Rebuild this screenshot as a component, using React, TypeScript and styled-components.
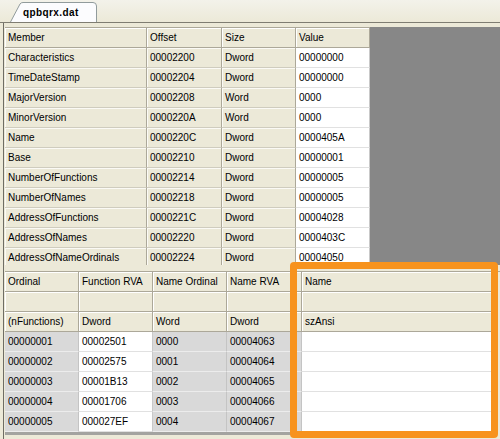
import React from "react";
import styled, { createGlobalStyle } from "styled-components";

const GlobalStyle = createGlobalStyle`
  html, body {
    margin: 0;
    padding: 0;
    background: #ece9d8;
  }
  body {
    font-family: "Liberation Sans", Arial, sans-serif;
    font-size: 10px;
    color: #000;
  }
`;

type Tone = "head" | "beige" | "white" | "gray";

const exportDir = [
  ["Characteristics", "00002200", "Dword", "00000000"],
  ["TimeDateStamp", "00002204", "Dword", "00000000"],
  ["MajorVersion", "00002208", "Word", "0000"],
  ["MinorVersion", "0000220A", "Word", "0000"],
  ["Name", "0000220C", "Dword", "0000405A"],
  ["Base", "00002210", "Dword", "00000001"],
  ["NumberOfFunctions", "00002214", "Dword", "00000005"],
  ["NumberOfNames", "00002218", "Dword", "00000005"],
  ["AddressOfFunctions", "0000221C", "Dword", "00004028"],
  ["AddressOfNames", "00002220", "Dword", "0000403C"],
  ["AddressOfNameOrdinals", "00002224", "Dword", "00004050"],
];

const exports = [
  ["00000001", "00002501", "0000", "00004063"],
  ["00000002", "00002575", "0001", "00004064"],
  ["00000003", "00001B13", "0002", "00004065"],
  ["00000004", "00001706", "0003", "00004066"],
  ["00000005", "000027EF", "0004", "00004067"],
];

const lowerHead = [
  ["Ordinal", "Function RVA", "Name Ordinal", "Name RVA", "Name"],
  ["", "", "", "", ""],
  ["(nFunctions)", "Dword", "Word", "Dword", "szAnsi"],
];

const lowerTones: Tone[] = ["gray", "white", "gray", "gray", "white"];

const App = () => {
  return (
    <Window>
      <GlobalStyle />
      <TabStrip>
        <Tab>
          <svg width="88" height="21" viewBox="0 0 88 21">
            <path
              d="M0.5 21 L10 3 Q11 1.5 13 1.5 L83 1.5 Q86.5 1.5 86.5 5 L86.5 21"
              fill="#fcfcfe"
              stroke="#919b9c"
            />
          </svg>
          <TabLabel>qpbqrx.dat</TabLabel>
        </Tab>
      </TabStrip>
      <Body>
        <UpperPane>
          <Grid $cols="142px 75px 74px 74px">
            <Cell $tone="head">Member</Cell>
            <Cell $tone="head">Offset</Cell>
            <Cell $tone="head">Size</Cell>
            <Cell $tone="head">Value</Cell>
            {exportDir.map((row) =>
              row.map((v, i) => (
                <Cell key={row[0] + i} $tone={i === 3 ? "white" : "beige"}>
                  {v}
                </Cell>
              ))
            )}
          </Grid>
          <Filler />
        </UpperPane>
        <Splitter />
        <LowerPane>
          <Grid $cols="74px 74px 74px 75px 190px">
            {lowerHead.map((row, r) =>
              row.map((v, i) => (
                <Cell key={"h" + r + i} $tone="head">
                  {v}
                </Cell>
              ))
            )}
            {exports.map((row) =>
              [...row, ""].map((v, i) => (
                <Cell key={row[0] + i} $tone={lowerTones[i]}>
                  {v}
                </Cell>
              ))
            )}
          </Grid>
        </LowerPane>
        <ScrollEdge />
      </Body>
      <Highlight />
    </Window>
  );
};

const Window = styled.div`
  position: relative;
  width: 500px;
  height: 439px;
  overflow: hidden;
  background: #ece9d8;
  display: flex;
  flex-direction: column;
`;

const TabStrip = styled.div`
  height: 22px;
  flex: none;
  display: flex;
  align-items: flex-end;
  padding-left: 10px;
  background: linear-gradient(#f3f2ea, #ece9d8);
  border-bottom: 1px solid #7f7d72;
`;

const Tab = styled.div`
  position: relative;
  width: 88px;
  height: 21px;

  svg {
    position: absolute;
    left: 0;
    top: 0;
  }
`;

const TabLabel = styled.span`
  position: relative;
  display: flex;
  height: 100%;
  padding: 2px 0 0 13px;
  box-sizing: border-box;
  align-items: center;
  font-weight: bold;
  font-size: 10px;
  letter-spacing: 0.4px;
`;

const Body = styled.div`
  flex: 1;
  display: flex;
  flex-direction: column;
  margin-left: 3px;
  padding: 4px 0 0 1px;
  border-left: 1px solid #6f6d64;
`;

const UpperPane = styled.div`
  height: 238px;
  flex: none;
  display: flex;
  overflow: hidden;
`;

const Filler = styled.div`
  flex: 1;
  background: #878787;
`;

const Splitter = styled.div`
  height: 6px;
  flex: none;
`;

const LowerPane = styled.div`
  height: 161px;
  flex: none;
  overflow: hidden;
`;

const ScrollEdge = styled.div`
  height: 3px;
  width: 488px;
  background: #a3a3a0;
`;

const Grid = styled.div<{ $cols: string }>`
  display: grid;
  grid-template-columns: ${(p) => p.$cols};
  grid-auto-rows: 20px;
  align-content: start;
  border-top: 1px solid #aca899;
`;

const tones: Record<Tone, string> = {
  head: "background:#ece9d8;border-right:1px solid #aca899;border-bottom:1px solid #aca899;box-shadow:inset 1px 1px 0 #fff;",
  beige:
    "background:#ece9d8;border-right:1px solid #aca899;border-bottom:1px solid #cfccbe;box-shadow:inset 1px 1px 0 #fbfaf5;",
  white: "background:#fff;border-right:1px solid #c9c9c9;border-bottom:1px solid #e1e1e1;",
  gray: "background:#d9d9d9;border-right:1px solid #c4c4c4;border-bottom:1px solid #ececec;",
};

const Cell = styled.div<{ $tone: Tone }>`
  ${(p) => tones[p.$tone]}
  box-sizing: border-box;
  display: flex;
  align-items: center;
  padding: 0 3px;
  white-space: nowrap;
  overflow: hidden;
  font-size: 10px;
  line-height: 12px;
`;

const Highlight = styled.div`
  position: absolute;
  left: 290px;
  top: 262px;
  width: 208px;
  height: 176px;
  box-sizing: border-box;
  border: 7px solid #f7931e;
  border-radius: 4px;
  pointer-events: none;
`;

export default App;
